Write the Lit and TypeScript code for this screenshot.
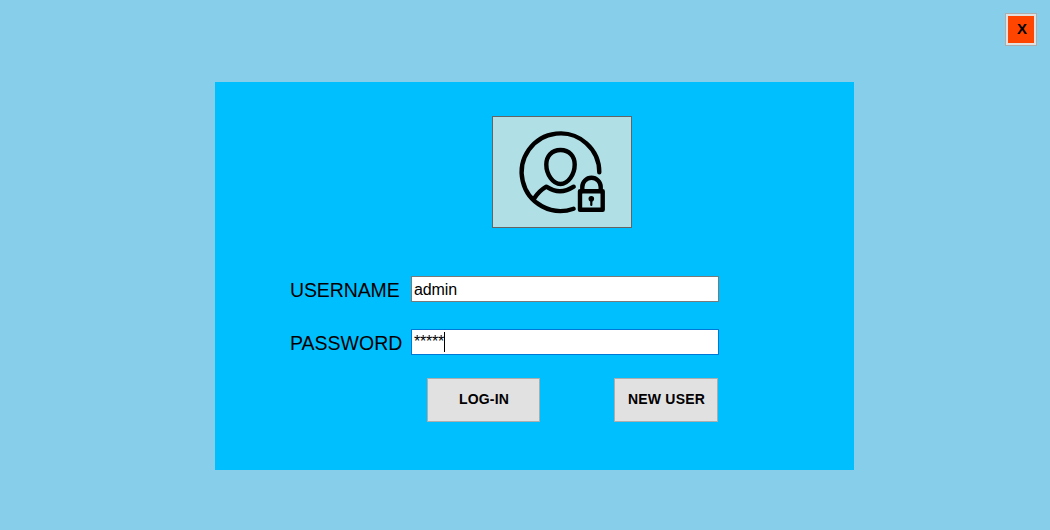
import { LitElement, html, css } from 'lit';
import { customElement } from 'lit/decorators.js';

@customElement('app-root')
export class AppRoot extends LitElement {
  static styles = css`
    :host {
      display: block;
      font-family: 'Liberation Sans', Arial, sans-serif;
      color: #000;
    }
    * { box-sizing: border-box; }
    .screen {
      width: 1050px;
      height: 530px;
      background: #87ceeb;
      display: grid;
      grid-template-columns: 215px 639px 1fr;
      grid-template-rows: 82px 388px 1fr;
      overflow: hidden;
    }
    button {
      font: bold 14px 'Liberation Sans', Arial, sans-serif;
      letter-spacing: 0.2px;
      color: #000;
      background: #e1e1e1;
      border: 1px solid #adadad;
      border-radius: 0;
      padding: 0 0 2px 1px;
      margin: 0;
      white-space: nowrap;
    }
    .close {
      grid-column: 3;
      grid-row: 1;
      justify-self: end;
      margin: 13px 13px 0 0;
      width: 32px;
      height: 33px;
      background: #ff4500;
      box-shadow: inset 0 0 0 2px #e1e1e1;
      font-size: 15px;
      padding: 0 0 3px 2px;
    }
    .panel {
      grid-column: 2;
      grid-row: 2;
      background: #00bfff;
      display: flex;
      flex-direction: column;
      padding: 34px 0 0 75px;
    }
    .picture {
      width: 140px;
      height: 112px;
      margin-left: 202px;
      margin-bottom: 48px;
      background: #b0e0e6;
      border: 1px solid #646464;
    }
    .picture svg { display: block; }
    .row {
      display: grid;
      grid-template-columns: 121px 308px;
      grid-template-rows: 26px;
      height: 26px;
      margin-bottom: 27px;
    }
    .label {
      font-size: 19.5px;
      line-height: 29px;
      white-space: nowrap;
    }
    .username { letter-spacing: -0.12px; }
    .field {
      background: #fff;
      border: 1px solid #7a7a7a;
      display: flex;
      align-items: center;
      padding: 0 2px;
      font-size: 16px;
      line-height: 24px;
    }
    .name { padding-top: 2px; letter-spacing: -0.1px; }
    .field.focus { border-color: #0078d7; }
    .stars { letter-spacing: -0.2px; }
    .caret { width: 1px; height: 20px; background: #000; }
    .actions {
      display: flex;
      gap: 74px;
      margin: -4px 0 0 137px;
    }
    .actions button { height: 44px; }
    .login { width: 113px; }
    .new-user { width: 104px; }
  `;

  render() {
    return html`
      <main class="screen">
        <button class="close">X</button>
        <section class="panel">
          <div class="picture">
            <svg width="138" height="110" viewBox="0 0 138 110" fill="none" stroke="#000"
              stroke-width="4.4" stroke-linecap="round" stroke-linejoin="round">
              <path d="M106.3 55.3A38.8 38.8 0 1 0 80.6 91.7" />
              <path d="M67.5 33C58.5 33 53.3 39.5 53.3 47.5C53.3 57.5 60 67 67.5 67S81.7 57.5 81.7 47.5C81.7 39.5 76.5 33 67.5 33Z" />
              <path d="M41.3 81.3Q46 74 53.3 69.7Q60.5 74.3 67 74.3T80.7 69.7" />
              <path d="M89.3 74V70A9.2 9.2 0 0 1 107.7 70V74" />
              <path d="M87 74.2H109.7V92.7H87Z" />
              <circle cx="98.3" cy="81.8" r="2.8" fill="#000" stroke="none" />
              <path d="M98.3 82V88" stroke-width="2.2" />
            </svg>
          </div>
          <div class="row">
            <div class="label username">USERNAME</div>
            <div class="field name">admin</div>
          </div>
          <div class="row">
            <div class="label">PASSWORD</div>
            <div class="field focus"><span class="stars">*****</span><span class="caret"></span></div>
          </div>
          <div class="actions">
            <button class="login">LOG-IN</button>
            <button class="new-user">NEW USER</button>
          </div>
        </section>
      </main>
    `;
  }
}
